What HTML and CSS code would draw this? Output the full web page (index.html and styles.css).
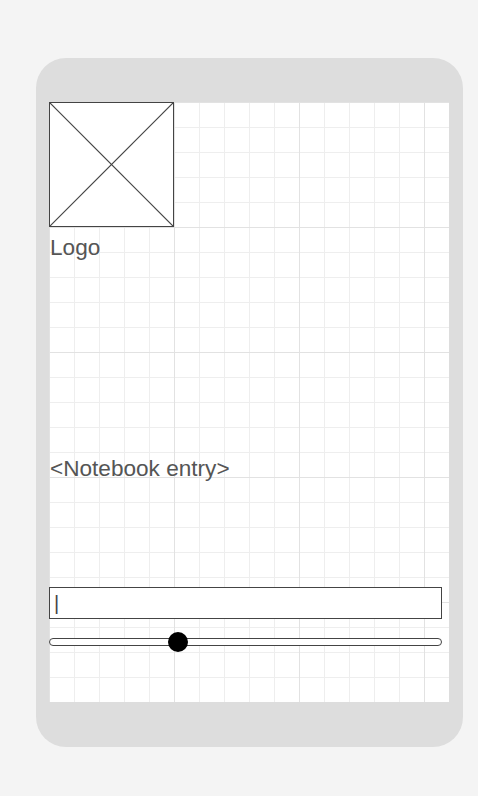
FILE: index.html
```html
<!DOCTYPE html>
<html>
<head>
<meta charset="utf-8">
<link rel="stylesheet" href="styles.css">
</head>
<body>
<div class="device">
  <div class="screen">
    <div class="logo-box">
      <svg class="logo-x" width="125" height="125" viewBox="0 0 125 125">
        <line x1="0" y1="0" x2="125" y2="125" stroke="#444" stroke-width="1.2"/>
        <line x1="125" y1="0" x2="0" y2="125" stroke="#444" stroke-width="1.2"/>
      </svg>
    </div>
    <div class="label logo-label">Logo</div>
    <div class="label entry">&lt;Notebook entry&gt;</div>
    <div class="input"><span class="caret">|</span></div>
    <div class="slider">
      <div class="track"></div>
      <div class="thumb"></div>
    </div>
  </div>
</div>
</body>
</html>
```

FILE: styles.css
```css
html, body {
  margin: 0;
  padding: 0;
}
body {
  background: #f4f4f4;
  width: 478px;
  height: 796px;
  font-family: "Liberation Sans", Arial, sans-serif;
}
.device {
  position: relative;
  top: 58px;
  left: 36px;
  width: 427px;
  height: 689px;
  box-sizing: border-box;
  padding: 44px 14px 45px 13px;
  background: #dddddd;
  border-radius: 30px;
}
.screen {
  width: 400px;
  height: 600px;
  display: flex;
  flex-direction: column;
  background-color: #ffffff;
  background-image:
    linear-gradient(to right, #e2e2e2 1px, transparent 1px),
    linear-gradient(to bottom, #e2e2e2 1px, transparent 1px),
    linear-gradient(to right, #eeeeee 1px, transparent 1px),
    linear-gradient(to bottom, #eeeeee 1px, transparent 1px);
  background-size: 125px 125px, 125px 125px, 25px 25px, 25px 25px;
  background-position: 0 0;
}
.logo-box {
  width: 125px;
  height: 125px;
  box-sizing: border-box;
  border: 1px solid #444;
  background: #fff;
  position: relative;
  overflow: hidden;
}
.logo-x {
  position: absolute;
  left: -1px;
  top: -1px;
}
.label {
  font-size: 22.6px;
  line-height: 26px;
  color: #555;
  padding-left: 1px;
}
.logo-label {
  margin-top: 8px;
}
.entry {
  margin-top: 195px;
}
.input {
  margin-top: 105px;
  width: 393px;
  height: 32px;
  box-sizing: border-box;
  border: 1px solid #444;
  background: #fff;
  display: flex;
  align-items: center;
  padding-left: 4px;
}
.caret {
  font-size: 20px;
  color: #444;
  line-height: 20px;
}
.slider {
  position: relative;
  margin-top: 19px;
  width: 393px;
  height: 8px;
}
.track {
  width: 393px;
  height: 8px;
  box-sizing: border-box;
  border: 1px solid #444;
  border-radius: 4px;
  background: #fff;
}
.thumb {
  position: absolute;
  left: 119px;
  top: -6px;
  width: 20px;
  height: 20px;
  border-radius: 50%;
  background: #000;
}
```
